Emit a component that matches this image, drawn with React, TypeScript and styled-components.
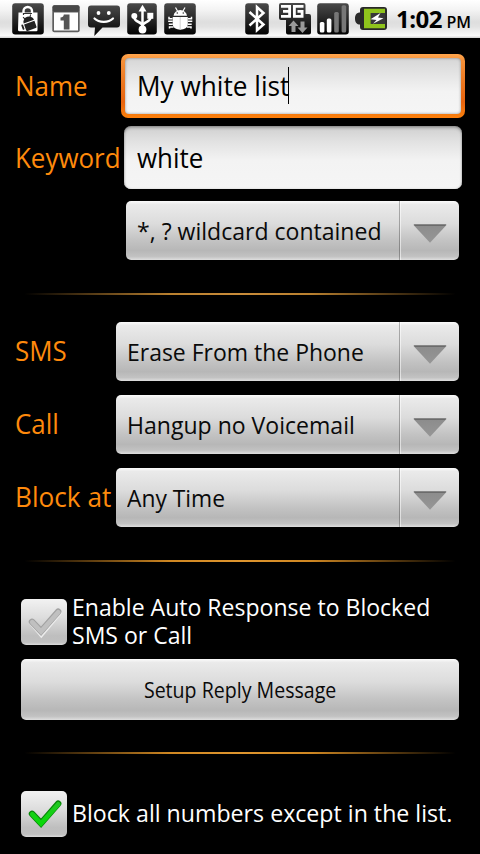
import React from 'react';
import styled, { createGlobalStyle, css } from 'styled-components';

const GlobalStyle = createGlobalStyle`
  * { box-sizing: border-box; }
  html, body { margin: 0; padding: 0; background: #000; }
  body { font-family: "Open Sans", "Noto Sans", sans-serif; }
`;

const silver = css`
  background: linear-gradient(#fbfbfb 0, #eaeaea 6%, #dcdcdc 38%, #c2c2c2 68%, #b7b7b7 84%, #c2c2c2 94%, #dedede 100%);
`;

const Screen = styled.div`
  width: 480px;
  height: 854px;
  background: #000;
  overflow: hidden;
  display: flex;
  flex-direction: column;
`;

const StatusBar = styled.header`
  height: 38px;
  flex: none;
  display: flex;
  align-items: flex-start;
  padding: 3px 9px 0 12px;
  background: linear-gradient(#ffffff 0, #f4f4f4 25%, #dedede 58%, #e2e2e2 70%, #fafafa 94%, #cfcfcf 100%);
`;

const IconGroup = styled.div<{ $gap: number; $after: number }>`
  display: flex;
  flex: none;
  gap: ${(p) => p.$gap}px;
  margin-right: ${(p) => p.$after}px;
  svg { display: block; flex: none; }
`;

const Clock = styled.div`
  flex: 1;
  display: flex;
  align-items: baseline;
  justify-content: space-between;
  height: 32px;
  line-height: 32px;
  color: #000;
  white-space: nowrap;
`;

const Time = styled.span`
  font-size: 24px;
  font-weight: 700;
  letter-spacing: -0.5px;
`;

const Meridiem = styled.span`
  font-size: 16px;
  font-weight: 600;
`;

const Form = styled.main`
  display: flex;
  flex-direction: column;
  padding-top: 16px;
`;

const Row = styled.div<{ $height: number; $bottom: number }>`
  display: flex;
  align-items: center;
  height: ${(p) => p.$height}px;
  margin-bottom: ${(p) => p.$bottom}px;
  padding-left: 15px;
`;

const Fit = styled.span<{ $x?: number }>`
  display: inline-block;
  white-space: nowrap;
  transform: scaleX(${(p) => p.$x ?? 0.96});
  transform-origin: 0 50%;
`;

const Label = styled.label<{ $width: number; $lift?: number }>`
  width: ${(p) => p.$width}px;
  flex: none;
  color: #ff8a0c;
  font-size: 27px;
  line-height: 36px;
  padding-bottom: ${(p) => p.$lift ?? 0}px;
  white-space: nowrap;
`;

const field = css`
  display: flex;
  align-items: center;
  color: #000;
  font-size: 27px;
  line-height: 36px;
`;

const FocusRing = styled.div`
  width: 344px;
  height: 64px;
  padding: 4px;
  border-radius: 7px;
  background: linear-gradient(#ffa64e 0, #f5913a 10%, #ec7720 45%, #e8640f 75%, #f77c0d 96%, #ff7f0a 100%);
`;

const FocusedField = styled.div`
  ${field}
  height: 56px;
  padding-left: 12px;
  border-radius: 4px;
  background: linear-gradient(#d6d6d6, #e5e5e5 30%, #f3f3f3 60%, #f5f5f5);
  box-shadow: inset 0 0 3px rgba(0, 0, 0, 0.4);
`;

const Caret = styled.span`
  width: 1px;
  height: 37px;
  margin: 0 0 2px -6px;
  background: #000;
`;

const Field = styled.div`
  ${field}
  width: 338px;
  height: 63px;
  margin-left: 3px;
  padding-left: 13px;
  border-radius: 7px;
  background: linear-gradient(#cfcfcf, #e2e2e2 25%, #f3f3f3 55%, #f5f5f5);
  box-shadow: inset 0 2px 3px rgba(0, 0, 0, 0.25), inset 0 0 2px rgba(0, 0, 0, 0.3), inset 0 -1px 1px #fff;
`;

const SpinnerBox = styled.div<{ $width: number }>`
  ${silver}
  width: ${(p) => p.$width}px;
  height: 59px;
  display: flex;
  align-items: stretch;
  border-radius: 5px;
  color: #0a0a0a;
  font-size: 24px;
`;

const SpinnerText = styled.div`
  flex: 1;
  display: flex;
  align-items: center;
  min-width: 0;
  padding: 0 0 1px 11px;
`;

const SpinnerArrow = styled.div`
  width: 60px;
  display: flex;
  align-items: center;
  justify-content: center;
  border-left: 1px solid rgba(0, 0, 0, 0.27);
  box-shadow: inset 1px 0 0 rgba(255, 255, 255, 0.55);
  svg { display: block; margin: 6px 0 0 1px; }
`;

const Divider = styled.div<{ $bottom: number; $soft?: boolean }>`
  height: 2px;
  margin: 0 20px ${(p) => p.$bottom}px;
  background: linear-gradient(90deg, transparent 1%, ${(p) => (p.$soft ? '#b9802f' : '#cf8722')} 34%, ${(p) => (p.$soft ? '#c98c3a' : '#df962f')} 50%, ${(p) => (p.$soft ? '#b9802f' : '#cf8722')} 66%, transparent 99%);
`;

const CheckRow = styled.div<{ $height: number; $bottom: number }>`
  display: flex;
  align-items: center;
  gap: 5px;
  height: ${(p) => p.$height}px;
  margin-bottom: ${(p) => p.$bottom}px;
  padding-left: 21px;
  color: #fff;
  font-size: 24px;
  line-height: 28px;
`;

const CheckBox = styled.span`
  width: 46px;
  height: 46px;
  flex: none;
  border-radius: 5px;
  background: linear-gradient(#f2f2f2, #dddddd 40%, #bebebe 80%, #c0c0c0 94%, #dadada);
  svg { display: block; }
`;

const CheckLabel = styled.div`
  display: flex;
  flex-direction: column;
  align-items: flex-start;
  margin-top: -2px;
`;

const Button = styled.button`
  ${silver}
  width: 438px;
  height: 61px;
  margin: 0 0 32px 21px;
  padding: 0 0 2px;
  border: 0;
  border-radius: 5px;
  color: #0a0a0a;
  font-family: inherit;
  font-size: 22px;
  line-height: 30px;
  ${Fit} { transform-origin: 50% 50%; }
`;

const GradientHost = styled.div`
  height: 0;
  overflow: hidden;
`;

const Tile = ({ w, children }: { w: number; children: React.ReactNode }) => (
  <svg width={w} height="32" viewBox={`0 0 ${w} 32`}>
    <rect x="0.2" y="0.2" width={w - 0.4} height="31.2" rx="3" fill="url(#tile)" />
    {children}
  </svg>
);

const Defs = () => (
  <svg width="0" height="0">
    <defs>
      <linearGradient id="tile" x1="0" y1="0" x2="0" y2="1">
        <stop offset="0" stopColor="#4a4a4a" />
        <stop offset="0.5" stopColor="#272727" />
        <stop offset="1" stopColor="#020202" />
      </linearGradient>
      <linearGradient id="arrow" x1="0" y1="0" x2="0" y2="1">
        <stop offset="0" stopColor="#8c8c8c" />
        <stop offset="1" stopColor="#969696" />
      </linearGradient>
      <linearGradient id="green" x1="0" y1="0" x2="0" y2="1">
        <stop offset="0" stopColor="#1fc81f" />
        <stop offset="1" stopColor="#08d808" />
      </linearGradient>
    </defs>
  </svg>
);

const MarketIcon = () => (
  <Tile w={32}>
    <path d="M11.5 11V8a4.200 4 0 0 1 8.500 0v3" fill="none" stroke="#fff" strokeWidth="2.400" />
    <path d="M6.500 9.500h19V27a1.200 1.200 0 0 1-1.200 1.200H7.500A1.500 1.500 0 0 1 6 26.700Z" fill="#fff" />
    <path d="M11.500 12V10.500h8.500" fill="none" stroke="#333" strokeWidth="1.200" />
    <g transform="rotate(-20 17 19)" fill="#222">
      <path d="M11.500 18.500a5.500 5 0 0 1 11 0Z" />
      <path d="M13 12.500l1.500 2.500M21 12.500l-1.500 2.500" stroke="#222" strokeWidth="1" />
      <path d="M11.500 19.700h11v6a1.200 1.200 0 0 1-1.200 1.200h-8.600a1.200 1.200 0 0 1-1.200-1.200Z" />
      <rect x="8.600" y="19" width="1.800" height="5.500" rx="0.900" />
    </g>
  </Tile>
);

const CalendarIcon = () => (
  <svg width="28" height="32" viewBox="0 0 28 32">
    <rect x="0.300" y="2.300" width="27.400" height="27" rx="2" fill="#5e5e5e" />
    <rect x="0.800" y="2.300" width="26.400" height="6.500" rx="1.500" fill="#484848" />
    <rect x="2" y="9.500" width="24" height="18" fill="#fff" />
    <path d="M11.800 11.500h5.700v15h-5.700v-9H8.500v-3c2 0 3-.8 3.300-3Z" fill="#555" />
  </svg>
);

const MessageIcon = () => (
  <svg width="32" height="34" viewBox="0 0 32 34">
    <path d="M3 2.500h26a3 3 0 0 1 3 3v16a3 3 0 0 1-3 3H14.500L6.300 33 7 24.500H3a3 3 0 0 1-3-3v-16a3 3 0 0 1 3-3Z" fill="url(#tile)" />
    <circle cx="10.500" cy="10" r="1.900" fill="#fff" />
    <circle cx="20.800" cy="10" r="1.900" fill="#fff" />
    <path d="M6.500 15.500c4.500 4.400 14 4.400 18.500 0" fill="none" stroke="#fff" strokeWidth="2.200" strokeLinecap="round" />
  </svg>
);

const UsbIcon = () => (
  <Tile w={30}>
    <g fill="none" stroke="#fff" strokeWidth="2.500">
      <path d="M15.500 26V6" />
      <path d="M7.300 13v1.500c0 5 8.200 4 8.200 8.500" />
      <path d="M23.500 12v2.500c0 5-8 4-8 8.500" />
    </g>
    <path d="M15.500 1.800l4 6.700h-8Z" fill="#fff" />
    <circle cx="15.500" cy="26.500" r="3.900" fill="#fff" />
    <circle cx="7.300" cy="13" r="3" fill="#fff" />
    <rect x="20.300" y="9.800" width="6" height="6" fill="#fff" />
  </Tile>
);

const DebugIcon = () => (
  <Tile w={32}>
    <path d="M11.500 4.500l2 3.500M21 4.500l-2 3.500" stroke="#fff" strokeWidth="1.200" />
    <path d="M9.500 12.800a6.800 6.500 0 0 1 13.500 0Z" fill="#fff" />
    <circle cx="13.300" cy="10" r="0.800" fill="#333" />
    <circle cx="19.300" cy="10" r="0.800" fill="#333" />
    <path d="M8.700 14H23.800V21c0 3.700-3.500 5.700-7.500 5.700S8.700 24.700 8.700 21Z" fill="#fff" />
    <path d="M16.200 14v12.500" stroke="#ccc" strokeWidth="0.900" />
    <path d="M5 13.800v2H8.500M27.500 13.800v2H24M4.200 18.200h4.500M28.300 18.200h-4.500M4.800 21.200h4M27.700 21.200h-4M5.500 25.500v-1.500h4M27 25.500v-1.500h-4" fill="none" stroke="#fff" strokeWidth="1.500" />
  </Tile>
);

const BluetoothIcon = () => (
  <Tile w={24}>
    <path d="M4.500 9L18.500 21.500L12 27.300V4l6.500 6L4.500 22.500" fill="none" stroke="#fff" strokeWidth="2.500" />
  </Tile>
);

const NetworkIcon = () => (
  <svg width="32" height="32" viewBox="0 0 32 32">
    <path d="M2 0h22.500a2 2 0 0 1 2 2v9H30a2 2 0 0 1 2 2v16.500a2 2 0 0 1-2 2H9a2 2 0 0 1-2-2V17H2a2 2 0 0 1-2-2V2a2 2 0 0 1 2-2Z" fill="url(#tile)" />
    <g fill="none" stroke="#fff" strokeWidth="2.800">
      <path d="M2 3.400h8.600v10H2M4 8.400h6" />
      <path d="M24.500 3.400H15.400v10h7.700V8.400H18.500" />
    </g>
    <path d="M14.500 17.500l5 5.500h-3v6h-4v-6h-3ZM23.500 30l-5-5.500h3v-6h4v6h3Z" fill="#999" />
  </svg>
);

const SignalIcon = () => (
  <Tile w={32}>
    <rect x="2.800" y="19" width="4.600" height="10.500" rx="1.500" fill="#fff" />
    <rect x="9.800" y="15.500" width="4.600" height="14" rx="1.500" fill="#fff" />
    <rect x="17.200" y="9" width="4.600" height="20.500" rx="1.500" fill="#777" />
    <rect x="24.600" y="2.200" width="4.600" height="27.300" rx="1.500" fill="#777" />
  </Tile>
);

const BatteryIcon = () => (
  <svg width="32" height="32" viewBox="0 0 32 32">
    <path d="M8 4h21a3 3 0 0 1 3 3v17a3 3 0 0 1-3 3H8a3 3 0 0 1-3-3v-2.500c-3 0-5-2-5-6s2-6 5-6V7a3 3 0 0 1 3-3Z" fill="#292929" />
    <path d="M9 5.800h21v4.200H15.800v11H30v4.200H9Z" fill="#8fc41c" />
    <rect x="15.800" y="10" width="14.500" height="11" fill="#383838" />
    <path d="M25.500 10L15.500 16.200l6 .8-3.500 3.800 10.500-5.600-5.500-.8Z" fill="#fff" />
  </svg>
);

const DownArrow = () => (
  <svg width="34" height="19" viewBox="0 0 34 19">
    <path d="M0.500 1h33L17 18.700Z" fill="url(#arrow)" />
    <path d="M0.500 0.200h33l-1.500 1.800H2Z" fill="#6b6b6b" />
  </svg>
);

const CheckMark = ({ on }: { on?: boolean }) => (
  <svg width="46" height="46" viewBox="0 0 46 46">
    {!on && <path d="M11.500 24L20.300 34.500L37.700 13.700" fill="none" stroke="#ececec" strokeWidth="6.200" strokeLinecap="round" />}
    <path d="M11 22.800L20 32.300L37.200 12.700" fill="none" stroke={on ? '#078507' : '#a2a2a2'} strokeWidth="6.400" strokeLinecap="round" />
    <path d="M11.200 23.200L20 32.500L37.200 13.200" fill="none" stroke={on ? 'url(#green)' : '#c0c0c0'} strokeWidth="4.600" strokeLinecap="round" />
  </svg>
);

const Spinner = ({ text, width, scale }: { text: string; width: number; scale?: number }) => (
  <SpinnerBox $width={width}>
    <SpinnerText><Fit $x={scale}>{text}</Fit></SpinnerText>
    <SpinnerArrow><DownArrow /></SpinnerArrow>
  </SpinnerBox>
);

export default function App() {
  return (
    <Screen>
      <GlobalStyle />
      <GradientHost><Defs /></GradientHost>
      <StatusBar>
        <IconGroup $gap={8} $after={7}>
          <MarketIcon />
          <CalendarIcon />
          <MessageIcon />
        </IconGroup>
        <IconGroup $gap={7} $after={49}>
          <UsbIcon />
          <DebugIcon />
        </IconGroup>
        <IconGroup $gap={0} $after={10}>
          <BluetoothIcon />
        </IconGroup>
        <IconGroup $gap={6} $after={9}>
          <NetworkIcon />
          <SignalIcon />
          <BatteryIcon />
        </IconGroup>
        <Clock>
          <Time>1:02</Time>
          <Meridiem>PM</Meridiem>
        </Clock>
      </StatusBar>
      <Form>
        <Row $height={64} $bottom={8}>
          <Label $width={106}><Fit>Name</Fit></Label>
          <FocusRing>
            <FocusedField><Fit $x={0.97}>My white list</Fit><Caret /></FocusedField>
          </FocusRing>
        </Row>
        <Row $height={63} $bottom={12}>
          <Label $width={106}><Fit>Keyword</Fit></Label>
          <Field><Fit>white</Fit></Field>
        </Row>
        <Row $height={59} $bottom={33}>
          <Label $width={111} />
          <Spinner text="*, ? wildcard contained" width={333} />
        </Row>
        <Divider $bottom={27} $soft />
        <Row $height={59} $bottom={14}>
          <Label $width={101} $lift={2}><Fit>SMS</Fit></Label>
          <Spinner text="Erase From the Phone" width={343} scale={0.957} />
        </Row>
        <Row $height={59} $bottom={14}>
          <Label $width={101} $lift={2}><Fit>Call</Fit></Label>
          <Spinner text="Hangup no Voicemail" width={343} />
        </Row>
        <Row $height={59} $bottom={33}>
          <Label $width={101} $lift={2}><Fit $x={0.97}>Block at</Fit></Label>
          <Spinner text="Any Time" width={343} scale={0.95} />
        </Row>
        <Divider $bottom={37} />
        <CheckRow $height={46} $bottom={14}>
          <CheckBox><CheckMark /></CheckBox>
          <CheckLabel>
            <Fit>Enable Auto Response to Blocked</Fit>
            <Fit>SMS or Call</Fit>
          </CheckLabel>
        </CheckRow>
        <Button><Fit $x={0.89}>Setup Reply Message</Fit></Button>
        <Divider $bottom={37} />
        <CheckRow $height={46} $bottom={0}>
          <CheckBox><CheckMark on /></CheckBox>
          <CheckLabel><Fit $x={0.965}>Block all numbers except in the list.</Fit></CheckLabel>
        </CheckRow>
      </Form>
    </Screen>
  );
}
